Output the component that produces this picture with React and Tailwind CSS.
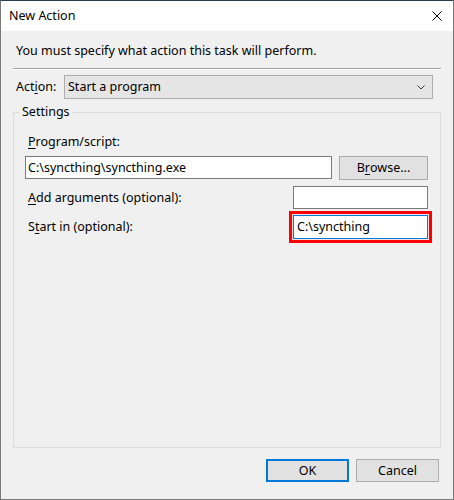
function Field({ value = '', className = '' }) {
  return (
    <div className={`h-[23px] bg-white border border-[#7a7a7a] flex items-center pl-[2px] ${className}`}>
      <span className="leading-[16px]">{value}</span>
    </div>
  )
}

function Button({ children, primary = false, className = '' }) {
  return (
    <div
      className={`h-[23px] w-[83px] flex items-center justify-center bg-[#e1e1e1] ${
        primary ? 'border-2 border-[#0078d7]' : 'border border-[#adadad]'
      } ${className}`}
    >
      {children}
    </div>
  )
}

export default function App() {
  return (
    <div
      className="w-[454px] h-[500px] flex flex-col border border-[#7a7a7a] border-t-[#2b3e50] text-[12.5px] text-black leading-[16px]"
      style={{ fontFamily: '"Noto Sans", "Open Sans", sans-serif' }}
    >
      {/* title bar */}
      <div className="h-[30px] bg-white flex items-center justify-between pl-[8px] pr-[11px]">
        <span>New Action</span>
        <svg width="10" height="10" viewBox="0 0 10 10" className="mt-[-1px]">
          <path d="M0.5 0.5 L9.5 9.5 M9.5 0.5 L0.5 9.5" stroke="#000" strokeWidth="1" />
        </svg>
      </div>

      {/* body */}
      <div className="flex-1 bg-[#f0f0f0] px-[12px] flex flex-col">
        <p className="mt-[12px] pl-[3px]">You must specify what action this task will perform.</p>
        <div className="mt-[9px] border-t border-t-[#a0a0a0] border-b border-b-white" />

        <div className="mt-[5px] flex items-center">
          <span className="w-[51px] pl-[3px]">
            Act<u className="underline-offset-2">i</u>on:
          </span>
          <div className="w-[369px] h-[24px] bg-[#e5e5e5] border border-[#adadad] flex items-center justify-between pl-[3px] pr-[7px]">
            <span>Start a program</span>
            <svg width="8" height="5" viewBox="0 0 8 5">
              <path d="M0.5 0.5 L4 4 L7.5 0.5" fill="none" stroke="#333" strokeWidth="1" />
            </svg>
          </div>
        </div>

        <fieldset className="mt-[5px] h-[344px] border border-[#dcdcdc] px-[11px] pr-[12px]">
          <legend className="-ml-[5px] px-[2px] leading-[16px]">Settings</legend>

          <div className="mt-[14px] pl-[3px]">
            <u className="underline-offset-2">P</u>rogram/script:
          </div>
          <div className="mt-[6px] flex items-start">
            <Field value="C:\syncthing\syncthing.exe" className="w-[307px]" />
            <Button className="ml-[7px] !w-[89px] !h-[24px]">
              B<u className="underline-offset-2">r</u>owse...
            </Button>
          </div>

          <div className="mt-[6px] flex items-center justify-between">
            <span className="pl-[3px]">
              <u className="underline-offset-2">A</u>dd arguments (optional):
            </span>
            <Field className="w-[135px]" />
          </div>

          <div className="mt-[2px] flex items-center justify-between">
            <span className="pl-[3px]">
              S<u className="underline-offset-2">t</u>art in (optional):
            </span>
            <div className="-mr-[4px] border-[3px] border-[#ff0000] p-[1px] bg-[#fbe3e3]">
              <div className="w-[135px] h-[24px] bg-white border border-[#0078d7] flex items-center pl-[3px]">
                C:\syncthing
              </div>
            </div>
          </div>
        </fieldset>

        <div className="mt-[11px] mr-[2px] flex justify-end gap-[7px]">
          <Button primary>OK</Button>
          <Button>Cancel</Button>
        </div>
      </div>
    </div>
  )
}
